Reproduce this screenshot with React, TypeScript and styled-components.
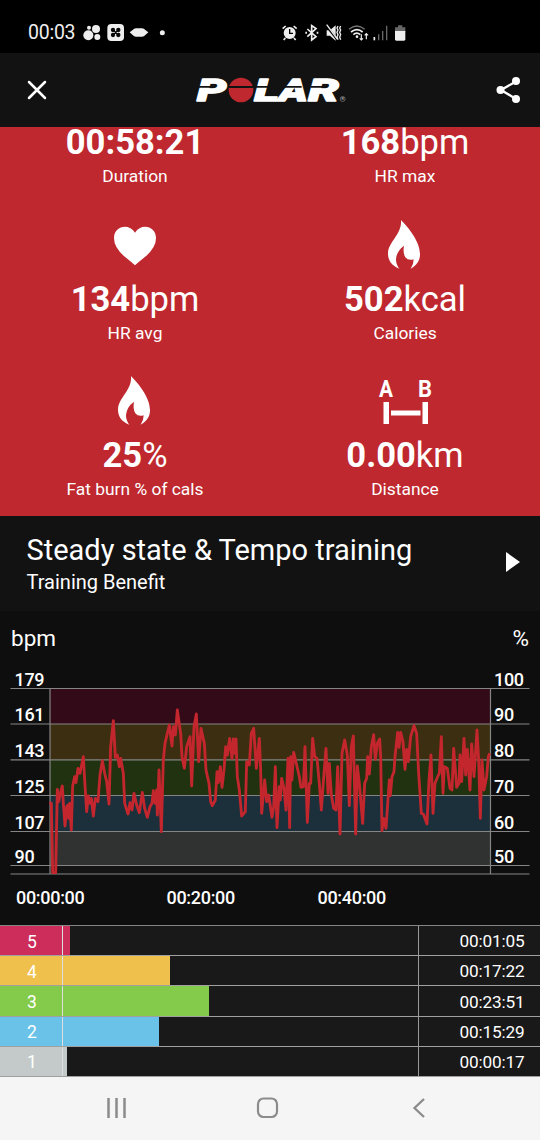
import React from 'react';
import styled, { createGlobalStyle } from 'styled-components';

const GlobalStyle = createGlobalStyle`
  * { box-sizing: border-box; }
  body { margin: 0; background: #0e0e0e; font-family: Roboto, "Liberation Sans", sans-serif; color: #fff; }
  svg { display: block; }
`;

const Screen = styled.main`
  width: 540px;
  height: 1140px;
  display: flex;
  flex-direction: column;
  overflow: hidden;
  background: #0e0e0e;
`;

const StatusBar = styled.div`
  height: 53px;
  flex: none;
  display: flex;
  align-items: flex-start;
  padding: 18px 0 0 28px;
  background: #000;
  color: #eee;
`;

const Clock = styled.time`
  width: 53px;
  font-size: 19.5px;
  line-height: 29px;
  letter-spacing: -0.25px;
  white-space: nowrap;
`;

const StatusRight = styled.div`
  margin-left: 104px;
`;

const AppBar = styled.header`
  height: 74px;
  flex: none;
  display: flex;
  align-items: center;
  justify-content: space-between;
  padding: 0 19px 0 26px;
  background: #121212;
`;

const LogoBox = styled.div`
  margin-left: -2px;
`;

const Stats = styled.section`
  height: 389px;
  flex: none;
  display: grid;
  grid-template-columns: 1fr 1fr;
  grid-template-rows: 85px 156px 148px;
  background: #be282e;
`;

const Stat = styled.div`
  display: flex;
  flex-direction: column;
  align-items: center;
`;

const StatIcon = styled.div`
  height: 72px;
  flex: none;
  padding-top: 8px;
`;

const StatValue = styled.div`
  height: 31px;
  font-size: 34.6px;
  line-height: 31px;
  white-space: nowrap;
`;

const StatNumber = styled.span`
  font-weight: 700;
`;

const StatLabel = styled.div`
  margin-top: 4.5px;
  font-size: 17.4px;
  line-height: 26px;
`;

const Benefit = styled.section`
  height: 95px;
  flex: none;
  display: flex;
  align-items: center;
  justify-content: space-between;
  padding: 0 20px 0 26.5px;
  background: #121212;
`;

const BenefitTitle = styled.h1`
  margin: 0;
  font-size: 29px;
  font-weight: 400;
  line-height: 36px;
`;

const BenefitSub = styled.p`
  margin: 0;
  font-size: 20px;
  line-height: 28px;
`;

const BenefitArrow = styled.div`
  margin-bottom: 3px;
`;

const ChartHeader = styled.div`
  height: 49px;
  flex: none;
  display: flex;
  justify-content: space-between;
  padding: 13px 11px 0;
  font-size: 22.5px;
  line-height: 28px;
`;

const ZoneTable = styled.section`
  flex: none;
  height: 152px;
  display: flex;
  flex-direction: column;
  border-top: 1px solid #858585;
  background: #191919;
`;

const ZoneRow = styled.div`
  flex: 1;
  display: grid;
  grid-template-columns: 63px 356px 1fr;
  border-bottom: 1px solid #a0a0a0;
`;

const ZoneNumber = styled.div<{ $color: string }>`
  display: flex;
  align-items: center;
  justify-content: center;
  border-right: 1px solid #dedede;
  padding: 2px 0 0 2px;
  background: ${(p) => p.$color};
  font-size: 17.5px;
`;

const ZoneTrack = styled.div`
  display: flex;
  border-right: 1px solid #999;
`;

const ZoneBar = styled.div<{ $color: string; $length: number }>`
  width: ${(p) => p.$length}px;
  background: ${(p) => p.$color};
`;

const ZoneTime = styled.div`
  display: flex;
  align-items: center;
  justify-content: flex-end;
  padding: 1px 15.5px 0 0;
  font-size: 17.2px;
  letter-spacing: -0.15px;
`;

const NavBar = styled.nav`
  flex: 1;
  display: flex;
  align-items: flex-start;
  padding: 20px 0 0 106px;
  background: #f5f5f5;
`;

const NavItem = styled.div<{ $width: number }>`
  width: ${(p) => p.$width}px;
`;

const AppIcons = () => (
  <svg width="90" height="30" viewBox="0 0 270 90" fill="#eee">
    <circle cx="22" cy="52" r="15" />
    <circle cx="45" cy="33" r="12" />
    <circle cx="49" cy="57" r="9" />
    <circle cx="24" cy="29" r="6" />
    <rect x="79" y="18" width="50" height="51" rx="12" />
    <g fill="#080808" stroke="#080808" strokeWidth="4" strokeLinecap="round">
      <circle cx="96" cy="36" r="4.500" />
      <circle cx="112" cy="36" r="4.500" />
      <circle cx="96" cy="51" r="4.500" />
      <circle cx="112" cy="51" r="4.500" />
      <path d="M96 36l16 15M112 36L96 51" />
    </g>
    <path d="M146 43l9-7q4-5 10-5h18q6 0 10 5l9 7-9 8q-4 5-10 5h-18q-6 0-10-5z" />
    <circle cx="244" cy="44" r="7.5" />
  </svg>
);

const SystemIcons = () => (
  <svg width="140" height="30" viewBox="0 0 420 90" fill="none" stroke="#eee" strokeWidth="4">
    <circle cx="44" cy="45" r="18" fill="#eee" stroke="none" />
    <path d="M23 32l9-8M56 24l9 8M31 60l-5 6M57 60l5 6" strokeWidth="5" />
    <path d="M44 33v13h10" stroke="#000" />
    <path d="M97 33l26 23-13 10V23l13 9-26 24" strokeWidth="5" />
    <path d="M91 44h5M125 44h5" strokeWidth="6" />
    <path d="M155 37h10l17-15v46l-17-15h-10z" fill="#eee" stroke="none" />
    <path d="M153 22l33 42" stroke="#000" strokeWidth="7" />
    <path d="M155 20l32 43" strokeWidth="4" />
    <path d="M189 24l-3 6 3 6-3 7 3 7-3 7 3 8M197 24l-3 6 3 6-3 7 3 7-3 7 3 8" strokeWidth="4" />
    <path d="M222 34q23-20 47 0" stroke="#777" />
    <path d="M228 42q18-14 35 0M235 50q10-9 21 0" strokeWidth="5" />
    <circle cx="246" cy="56" r="4" fill="#eee" stroke="none" />
    <path d="M259 49v17m-5-5l5 5 5-5M274 64V47m-5 5l5-5 5 5" strokeWidth="3.5" />
    <path d="M298 57v10" strokeWidth="5" />
    <path d="M311 49v18M323 39v28M335 23v44" stroke="#686868" />
    <path d="M360 28h9v-6h13v6h9v14h-31z" fill="#666" stroke="none" />
    <path d="M360 39h31v25q0 4-4 4h-23q-4 0-4-4z" fill="#eee" stroke="none" />
  </svg>
);

const CloseIcon = () => (
  <svg width="22" height="22" viewBox="0 0 22 22" stroke="#fff" strokeWidth="2.5" strokeLinecap="round">
    <path d="M3 3l16 16M19 3L3 19" />
  </svg>
);

const ShareIcon = () => (
  <svg width="26" height="28" viewBox="0 0 26 28" fill="#fff">
    <path d="M21 5.500L6 14l15 9" fill="none" stroke="#fff" strokeWidth="2.300" />
    <circle cx="21" cy="5" r="4" />
    <circle cx="5.500" cy="14" r="4" />
    <circle cx="21" cy="23" r="4" />
  </svg>
);

const Logo = () => (
  <svg width="160" height="40" viewBox="0 0 480 120">
    <g fill="#fff" stroke="#fff" strokeWidth="4" strokeLinejoin="round" fontFamily="Roboto, sans-serif" fontStyle="italic" fontWeight="900" fontSize="92">
      <text x="18" y="93" textLength="88" lengthAdjust="spacingAndGlyphs">P</text>
      <text x="190" y="93" textLength="74" lengthAdjust="spacingAndGlyphs">L</text>
      <text x="264" y="93" textLength="86" lengthAdjust="spacingAndGlyphs">A</text>
      <text x="352" y="93" textLength="92" lengthAdjust="spacingAndGlyphs">R</text>
    </g>
    <circle cx="150" cy="60" r="37" fill="#be282e" />
    <path d="M24 48h46v5H22zM113 48h76l-1 6h-75zM194 48h52v5h-53zM272 48h60v5h-64zM360 48h42v5h-44z" fill="#121212" />
    <circle cx="455" cy="87" r="7.500" fill="none" stroke="#aaa" strokeWidth="1.500" />
    <text x="455" y="91" fill="#aaa" fontSize="11" fontWeight="700" textAnchor="middle">R</text>
  </svg>
);

const HeartIcon = () => (
  <svg width="44" height="52" viewBox="0 0 132 156" fill="#fff">
    <path d="M66 136Q56 127 41 115Q3 85 3 55C3 17 48 9 66 38C84 9 129 17 129 55Q129 85 91 115Q76 127 66 136Z" />
  </svg>
);

const FlameIcon = () => (
  <svg width="36" height="52" viewBox="0 0 108 156" fill="#fff">
    <path d="M42 0C58 17 99 60 99 103C99 123 88 137 71 146Q80 134 80 118Q64 123 55 112Q47 99 51 77Q29 93 27 117Q27 134 37 146C14 137 3 121 3 101C3 66 46 43 42 0Z" />
  </svg>
);

const DistanceIcon = () => (
  <svg width="58" height="52" viewBox="0 0 58 52" fill="#fff">
    <g fontSize="24.500" fontWeight="700" fontFamily="Roboto, sans-serif">
      <text x="3" y="20.500" textLength="14" lengthAdjust="spacingAndGlyphs">A</text>
      <text x="42" y="20.500" textLength="14" lengthAdjust="spacingAndGlyphs">B</text>
    </g>
    <path d="M7.500 26h5.500v22H7.500zM46.500 26H52v22h-5.500zM15 34.500h29.500v5H15z" />
  </svg>
);

type StatItem = { icon?: React.ReactNode; value: string; unit?: string; label: string };

const stats: StatItem[] = [
  { value: '00:58:21', label: 'Duration' },
  { value: '168', unit: 'bpm', label: 'HR max' },
  { icon: <HeartIcon />, value: '134', unit: 'bpm', label: 'HR avg' },
  { icon: <FlameIcon />, value: '502', unit: 'kcal', label: 'Calories' },
  { icon: <FlameIcon />, value: '25', unit: '%', label: 'Fat burn % of cals' },
  { icon: <DistanceIcon />, value: '0.00', unit: 'km', label: 'Distance' },
];

const gridLines = [
  { y: 28.5, bpm: 179, percent: 100, band: '#330a18' },
  { y: 64, bpm: 161, percent: 90, band: '#3c2e10' },
  { y: 99.8, bpm: 143, percent: 80, band: '#203210' },
  { y: 135.500, bpm: 125, percent: 70, band: '#1b303b' },
  { y: 171.500, bpm: 107, percent: 60, band: '#303232' },
  { y: 205.500, bpm: 90, percent: 50, band: '#141414' },
];
const CHART_BASE = 214;

/* Heart-rate samples, three units per pixel, in three consecutive stretches of time. */
const heartRate: { offset: number; points: string }[] = [
  {
    offset: 0,
    points:
      '148,428 154,430 158,638 167,638 172,388 176,425 182,395 187,378 190,430 195,498 200,440 204,435 206,475 209,430 214,510 218,378 224,350 228,368 234,325 240,340 244,320 250,290 254,360 260,455 265,408 270,430 274,415 280,468 286,415 294,425 300,345 307,302 314,340 320,365 327,432 332,260 340,182 346,292 352,285 358,320 362,295 370,340 374,430 384,462 390,428 396,450 402,400 410,435 418,458 427,397 434,445 442,472 450,440 456,430 460,392 465,430 470,390 472,465 477,330 484,515 490,300 495,250 502,220 508,195 516,258 520,200 526,225',
  },
  {
    offset: 510,
    points:
      '22,150 32,220 36,290 43,325 50,260 60,230 65,378 70,250 72,200 79,162 86,305 93,205 103,250 108,330 117,370 122,425 127,437 136,420 141,335 145,368 151,320 156,382 162,330 167,260 172,285 179,235 186,295 190,237 195,280 198,237 202,350 208,390 215,468 226,455 230,305 238,315 244,220 251,205 259,325 268,235 272,330 275,460 284,360 290,425 296,405 306,472 311,440 316,320 321,503 328,380 331,420 335,355 342,385 348,450 354,295 359,503 362,290 366,360 371,277 380,315 388,350 393,382 400,380 405,260 412,487 418,370 422,370 428,235 434,290 441,295 448,370 454,450 462,340 468,265 474,400 478,310 484,405 491,445 498,450 503,320',
  },
  {
    offset: 1020,
    points:
      '0,522 6,280 14,240 22,285 28,437 34,260 40,228 47,522 52,318 58,370 68,490 74,370 80,355 83,290 88,342 94,260 101,224 106,298 112,250 119,237 122,290 126,512 131,475 138,505 148,360 151,407 156,350 162,335 165,290 173,217 177,262 182,217 189,245 195,328 200,268 205,305 212,230 222,197 230,220 236,340 244,460 250,462 261,492 267,360 273,285 279,460 285,370 293,350 298,340 304,230 309,400 313,320 322,325 330,385 336,390 341,265 350,382 357,370 360,285 365,365 372,235 377,345 382,268 390,390 395,252 402,350 411,210 416,300 421,475 426,300 432,390 440,350 445,290 449,280',
  },
];

const heartRateLine = heartRate
  .flatMap(({ offset, points }) =>
    points.split(' ').map((pair) => {
      const [x, y] = pair.split(',').map(Number);
      return `${x + offset},${y}`;
    }),
  )
  .join(' ');

const HeartRateChart = () => (
  <svg width="540" height="265" viewBox="0 0 540 265">
    {gridLines.map(({ y, band }, i) => (
      <rect key={y} x="50" y={y} width="440" height={(gridLines[i + 1]?.y ?? CHART_BASE) - y} fill={band} />
    ))}
    <g stroke="#858585" strokeWidth="1.200">
      {gridLines.map(({ y }) => (
        <path key={y} d={`M10.500 ${y}H529.500`} />
      ))}
      <path d={`M10.500 ${CHART_BASE}H529.500M50 28V${CHART_BASE}M490.500 28V${CHART_BASE}`} />
    </g>
    <polyline
      points={heartRateLine}
      transform="scale(0.33333)"
      fill="none"
      stroke="#c4262e"
      strokeWidth="8.500"
      strokeLinejoin="round"
    />
    <g fill="#fff" fontSize="18" fontWeight="500" letterSpacing="-0.3">
      {gridLines.map(({ y, bpm, percent }) => (
        <React.Fragment key={bpm}>
          <text x="14.500" y={y - 2.800}>{bpm}</text>
          <text x="494" y={y - 2.800}>{percent}</text>
        </React.Fragment>
      ))}
      <text x="16" y="244.300">00:00:00</text>
      <text x="166.500" y="244.300">00:20:00</text>
      <text x="317.500" y="244.300">00:40:00</text>
    </g>
  </svg>
);

const zones = [
  { zone: 5, color: '#cd2d5b', length: 7, time: '00:01:05' },
  { zone: 4, color: '#efc04c', length: 106.500, time: '00:17:22' },
  { zone: 3, color: '#84cb4b', length: 145.500, time: '00:23:51' },
  { zone: 2, color: '#6bc2e8', length: 95.500, time: '00:15:29' },
  { zone: 1, color: '#c3cac9', length: 3.500, time: '00:00:17' },
];

export default function App() {
  return (
    <Screen>
      <GlobalStyle />
      <StatusBar>
        <Clock>00:03</Clock>
        <AppIcons />
        <StatusRight>
          <SystemIcons />
        </StatusRight>
      </StatusBar>
      <AppBar>
        <CloseIcon />
        <LogoBox>
          <Logo />
        </LogoBox>
        <ShareIcon />
      </AppBar>
      <Stats>
        {stats.map(({ icon, value, unit, label }) => (
          <Stat key={label}>
            {icon && <StatIcon>{icon}</StatIcon>}
            <StatValue>
              <StatNumber>{value}</StatNumber>
              {unit}
            </StatValue>
            <StatLabel>{label}</StatLabel>
          </Stat>
        ))}
      </Stats>
      <Benefit>
        <div>
          <BenefitTitle>Steady state &amp; Tempo training</BenefitTitle>
          <BenefitSub>Training Benefit</BenefitSub>
        </div>
        <BenefitArrow>
          <svg width="14" height="20" viewBox="0 0 14 20" fill="#fff">
            <path d="M0 0l14 10L0 20z" />
          </svg>
        </BenefitArrow>
      </Benefit>
      <ChartHeader>
        <span>bpm</span>
        <span>%</span>
      </ChartHeader>
      <HeartRateChart />
      <ZoneTable>
        {zones.map(({ zone, color, length, time }) => (
          <ZoneRow key={zone}>
            <ZoneNumber $color={color}>{zone}</ZoneNumber>
            <ZoneTrack>
              <ZoneBar $color={color} $length={length} />
            </ZoneTrack>
            <ZoneTime>{time}</ZoneTime>
          </ZoneRow>
        ))}
      </ZoneTable>
      <NavBar>
        <NavItem $width={150}>
          <svg width="21" height="22" viewBox="0 0 21 22" stroke="#8b8b8b" strokeWidth="2.500">
            <path d="M2.500 1v20M10.500 1v20M18.500 1v20" />
          </svg>
        </NavItem>
        <NavItem $width={156}>
          <svg width="23" height="22" viewBox="0 0 23 22" fill="none" stroke="#8b8b8b" strokeWidth="2.200">
            <rect x="2" y="1.500" width="19" height="18.500" rx="5.500" />
          </svg>
        </NavItem>
        <NavItem $width={20}>
          <svg width="13" height="22" viewBox="0 0 13 22" fill="none" stroke="#8b8b8b" strokeWidth="2.300">
            <path d="M12 2L2.500 11l9.500 9" />
          </svg>
        </NavItem>
      </NavBar>
    </Screen>
  );
}
